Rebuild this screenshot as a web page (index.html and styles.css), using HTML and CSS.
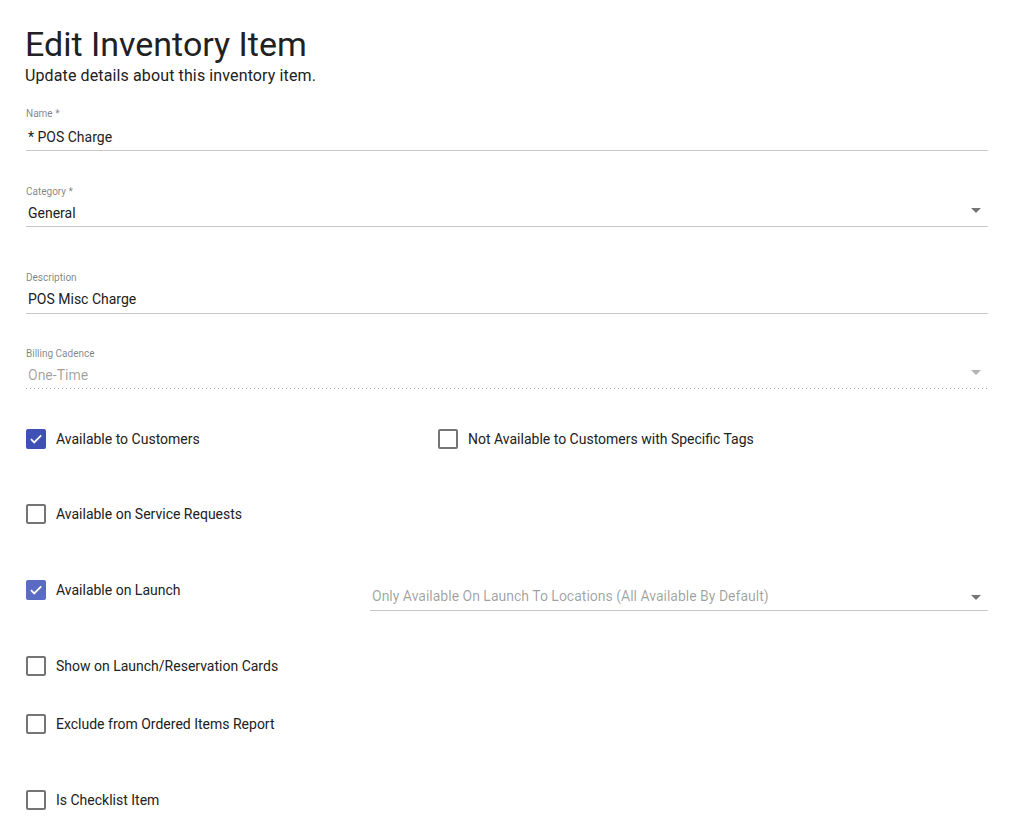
FILE: index.html
```html
<!DOCTYPE html>
<html lang="en">
<head>
<meta charset="utf-8">
<title>Edit Inventory Item</title>
<link rel="stylesheet" href="styles.css">
</head>
<body>
<div class="page">
  <h1 class="title">Edit Inventory Item</h1>
  <p class="subtitle">Update details about this inventory item.</p>

  <div class="field f-name">
    <div class="label">Name *</div>
    <div class="input">* POS Charge</div>
  </div>

  <div class="field f-category">
    <div class="label">Category *</div>
    <div class="input select">General
      <svg class="arrow" viewBox="0 0 24 24"><path d="M7 10l5 5 5-5z"/></svg>
    </div>
  </div>

  <div class="field f-desc">
    <div class="label">Description</div>
    <div class="input multiline">POS Misc Charge</div>
  </div>

  <div class="field f-billing disabled">
    <div class="label">Billing Cadence</div>
    <div class="input select">One-Time
      <svg class="arrow" viewBox="0 0 24 24"><path d="M7 10l5 5 5-5z"/></svg>
    </div>
  </div>

  <div class="checks">
    <div class="row r1">
      <label class="check col-a">
        <span class="box checked"><svg viewBox="0 0 20 20"><path d="M5 10.2l3.2 3.2L15.2 6.4" /></svg></span>
        <span class="text">Available to Customers</span>
      </label>
      <label class="check">
        <span class="box"></span>
        <span class="text">Not Available to Customers with Specific Tags</span>
      </label>
    </div>

    <div class="row r2">
      <label class="check">
        <span class="box"></span>
        <span class="text">Available on Service Requests</span>
      </label>
    </div>

    <div class="row r3">
      <label class="check col-b">
        <span class="box checked light"><svg viewBox="0 0 20 20"><path d="M5 10.2l3.2 3.2L15.2 6.4" /></svg></span>
        <span class="text">Available on Launch</span>
      </label>
      <div class="launch-select">
        <span>Only Available On Launch To Locations (All Available By Default)</span>
        <svg class="arrow" viewBox="0 0 24 24"><path d="M7 10l5 5 5-5z"/></svg>
      </div>
    </div>

    <div class="row r4">
      <label class="check">
        <span class="box"></span>
        <span class="text">Show on Launch/Reservation Cards</span>
      </label>
    </div>

    <div class="row r5">
      <label class="check">
        <span class="box"></span>
        <span class="text">Exclude from Ordered Items Report</span>
      </label>
    </div>

    <div class="row r6">
      <label class="check">
        <span class="box"></span>
        <span class="text">Is Checklist Item</span>
      </label>
    </div>
  </div>
</div>
</body>
</html>
```

FILE: styles.css
```css
* { box-sizing: border-box; }

html, body {
  margin: 0;
  padding: 0;
  background: #ffffff;
}

body {
  font-family: Roboto, "Liberation Sans", Arial, sans-serif;
  color: rgba(0, 0, 0, 0.87);
}

.page {
  width: 1016px;
  padding: 24px 28px 0 26px;
}

.title {
  margin: 0 0 0 -1px;
  font-size: 34px;
  line-height: 40px;
  font-weight: 400;
  color: #212121;
}

.subtitle {
  margin: 2px 0 0 -1px;
  font-size: 16px;
  line-height: 20px;
  letter-spacing: 0.12px;
  color: #212121;
}

.field {
  position: relative;
}

.f-name { margin-top: 22px; }
.f-category { margin-top: 35px; }
.f-desc { margin-top: 45px; }
.f-billing { margin-top: 34px; }

.label {
  font-size: 10px;
  line-height: 12px;
  color: rgba(0, 0, 0, 0.5);
  padding-left: 0;
}

.input {
  position: relative;
  font-size: 14px;
  line-height: 20px;
  padding: 7px 0 3px 2px;
  border-bottom: 1px solid #c8c8c8;
  color: #212121;
}

.input.select {
  padding-top: 5px;
}

.input.multiline {
  padding-top: 5px;
  padding-bottom: 4px;
}

.disabled .input {
  color: rgba(0, 0, 0, 0.38);
  border-bottom: none;
  padding-bottom: 4px;
  background-image: linear-gradient(to right, #a0a0a0 1px, transparent 1px);
  background-size: 4px 1px;
  background-repeat: repeat-x;
  background-position: 0 100%;
}

.arrow {
  position: absolute;
  right: 0;
  top: 0;
  width: 24px;
  height: 24px;
  fill: rgba(0, 0, 0, 0.54);
}

.disabled .arrow {
  fill: rgba(0, 0, 0, 0.3);
}

.checks {
  padding-top: 38px;
}

.row {
  display: flex;
  align-items: flex-start;
  min-height: 24px;
}

.r2 { margin-top: 51px; }
.r3, .r6 { margin-top: 52px; }
.r4 { margin-top: 43px; }
.r5 { margin-top: 34px; }

.check {
  display: flex;
  align-items: center;
  height: 24px;
  font-size: 14px;
  color: #212121;
  cursor: pointer;
}

.col-a { width: 412px; }
.col-b { width: 344px; }

.box {
  width: 20px;
  height: 20px;
  border: 2px solid #757575;
  border-radius: 2px;
  margin-right: 10px;
  flex: none;
  display: flex;
  align-items: center;
  justify-content: center;
}

.box.checked {
  background: #3f51b5;
  border-color: #3f51b5;
}

.box.checked.light {
  background: #5a6bc4;
  border-color: #5a6bc4;
}

.box svg {
  width: 20px;
  height: 20px;
  flex: none;
  fill: none;
  stroke: #ffffff;
  stroke-width: 1.8;
  margin: -2px;
}

.launch-select {
  position: relative;
  flex: 1;
  margin-top: 8px;
  font-size: 14px;
  line-height: 20px;
  padding: 0 0 4px 2px;
  border-bottom: 1px solid #c8c8c8;
  color: rgba(0, 0, 0, 0.38);
}

.launch-select .arrow {
  top: -1px;
}
```
